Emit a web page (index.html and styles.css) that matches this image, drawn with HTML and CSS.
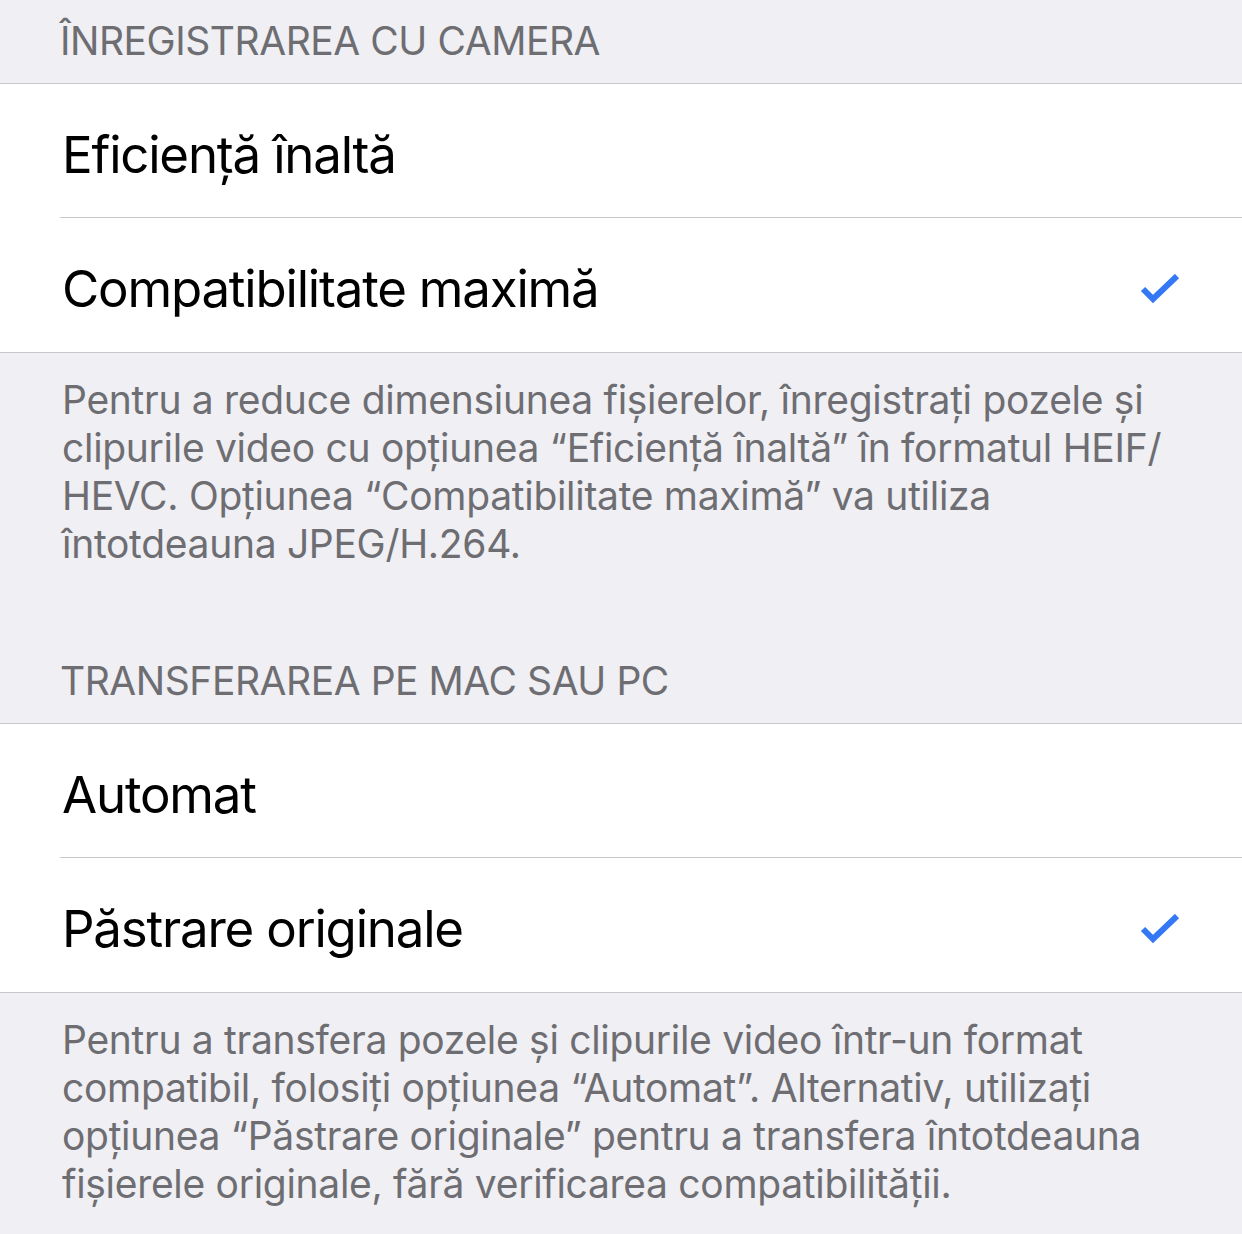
FILE: index.html
```html
<!DOCTYPE html>
<html lang="ro">
<head>
    <meta charset="UTF-8">
    <meta name="viewport" content="width=device-width, initial-scale=1.0">
    <title>Formate</title>
    <link rel="stylesheet" href="styles.css">
</head>
<body>
    <div class="settings">
        <div class="group-header">ÎNREGISTRAREA CU CAMERA</div>
        <div class="group">
            <div class="row">
                <span class="label">Eficiență înaltă</span>
            </div>
            <div class="row">
                <span class="label">Compatibilitate maximă</span>
                <svg class="check" viewBox="0 0 40 30" width="40" height="30">
                    <path d="M3 15 L13 25 L37 2" />
                </svg>
            </div>
        </div>
        <div class="group-footer">
            Pentru a reduce dimensiunea fișierelor, înregistrați pozele și<br>
            clipurile video cu opțiunea “Eficiență înaltă” în formatul HEIF/<br>
            HEVC. Opțiunea “Compatibilitate maximă” va utiliza<br>
            întotdeauna JPEG/H.264.
        </div>

        <div class="group-header">TRANSFERAREA PE MAC SAU PC</div>
        <div class="group">
            <div class="row">
                <span class="label">Automat</span>
            </div>
            <div class="row">
                <span class="label">Păstrare originale</span>
                <svg class="check" viewBox="0 0 40 30" width="40" height="30">
                    <path d="M3 15 L13 25 L37 2" />
                </svg>
            </div>
        </div>
        <div class="group-footer last">
            Pentru a transfera pozele și clipurile video într-un format<br>
            compatibil, folosiți opțiunea “Automat”. Alternativ, utilizați<br>
            opțiunea “Păstrare originale” pentru a transfera întotdeauna<br>
            fișierele originale, fără verificarea compatibilității.
        </div>
    </div>
</body>
</html>
```

FILE: styles.css
```css
body {
    margin: 0;
    background-color: #efeff4;
    font-family: Inter, "Noto Sans", sans-serif;
}
.settings {
    display: flex;
    flex-direction: column;
}
.group-header {
    height: 84px;
    box-sizing: border-box;
    display: flex;
    align-items: flex-end;
    padding: 0 60px 23px;
    font-size: 39px;
    line-height: 1;
    letter-spacing: -0.45px;
    color: #6d6d72;
    border-bottom: 1px solid #c8c7cc;
}
.group {
    background-color: #fff;
    border-bottom: 1px solid #c8c7cc;
}
.row {
    height: 134px;
    box-sizing: border-box;
    display: flex;
    align-items: center;
    justify-content: space-between;
    margin-left: 60px;
    padding: 7px 62px 0 2px;
    border-bottom: 1px solid #c8c7cc;
}
.row:last-child {
    border-bottom: none;
}
.label {
    font-size: 51px;
    letter-spacing: -1.2px;
    color: #000;
}
.check {
    fill: none;
    stroke: #3478f6;
    stroke-width: 6;
}
.group-footer {
    height: 287px;
    box-sizing: border-box;
    padding: 23px 60px 0 62px;
    font-size: 39px;
    line-height: 48px;
    letter-spacing: -0.3px;
    color: #6d6d72;
}
.group-footer.last {
    height: auto;
}
```
